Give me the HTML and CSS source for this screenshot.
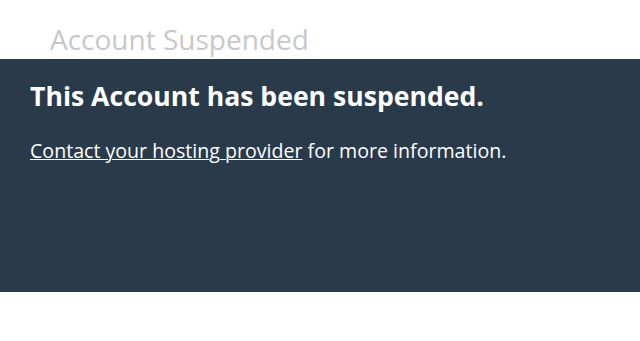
FILE: index.html
```html
<!DOCTYPE html>
<html>
<head>
<meta charset="utf-8">
<link rel="stylesheet" href="styles.css">
</head>
<body>
<header class="top">
  <h1 class="title">Account Suspended</h1>
</header>
<main class="panel">
  <h2 class="heading">This Account has been suspended.</h2>
  <p class="info"><a class="link" href="#">Contact your hosting provider</a> for more information.</p>
</main>
</body>
</html>
```
FILE: styles.css
```css
html, body {
  margin: 0;
  padding: 0;
  background: #fff;
  font-family: "Open Sans", "Liberation Sans", sans-serif;
}
.top {
  height: 59px;
  padding: 0 50px;
  box-sizing: border-box;
  display: flex;
  align-items: flex-end;
}
.title {
  margin: 0;
  font-size: 28px;
  font-weight: 400;
  color: #c8c8c8;
  line-height: 36px;
  padding-bottom: 2px;
}
.panel {
  background: #293a4b;
  height: 233px;
  box-sizing: border-box;
  padding: 19px 30px;
  color: #fff;
}
.heading {
  margin: 0;
  font-size: 26.6px;
  font-weight: 700;
  line-height: 36px;
}
.info {
  margin: 23px 0 0;
  font-size: 19.6px;
  line-height: 28px;
}
.link {
  color: #fff;
  text-decoration: underline;
  text-decoration-thickness: 1px;
}
```
